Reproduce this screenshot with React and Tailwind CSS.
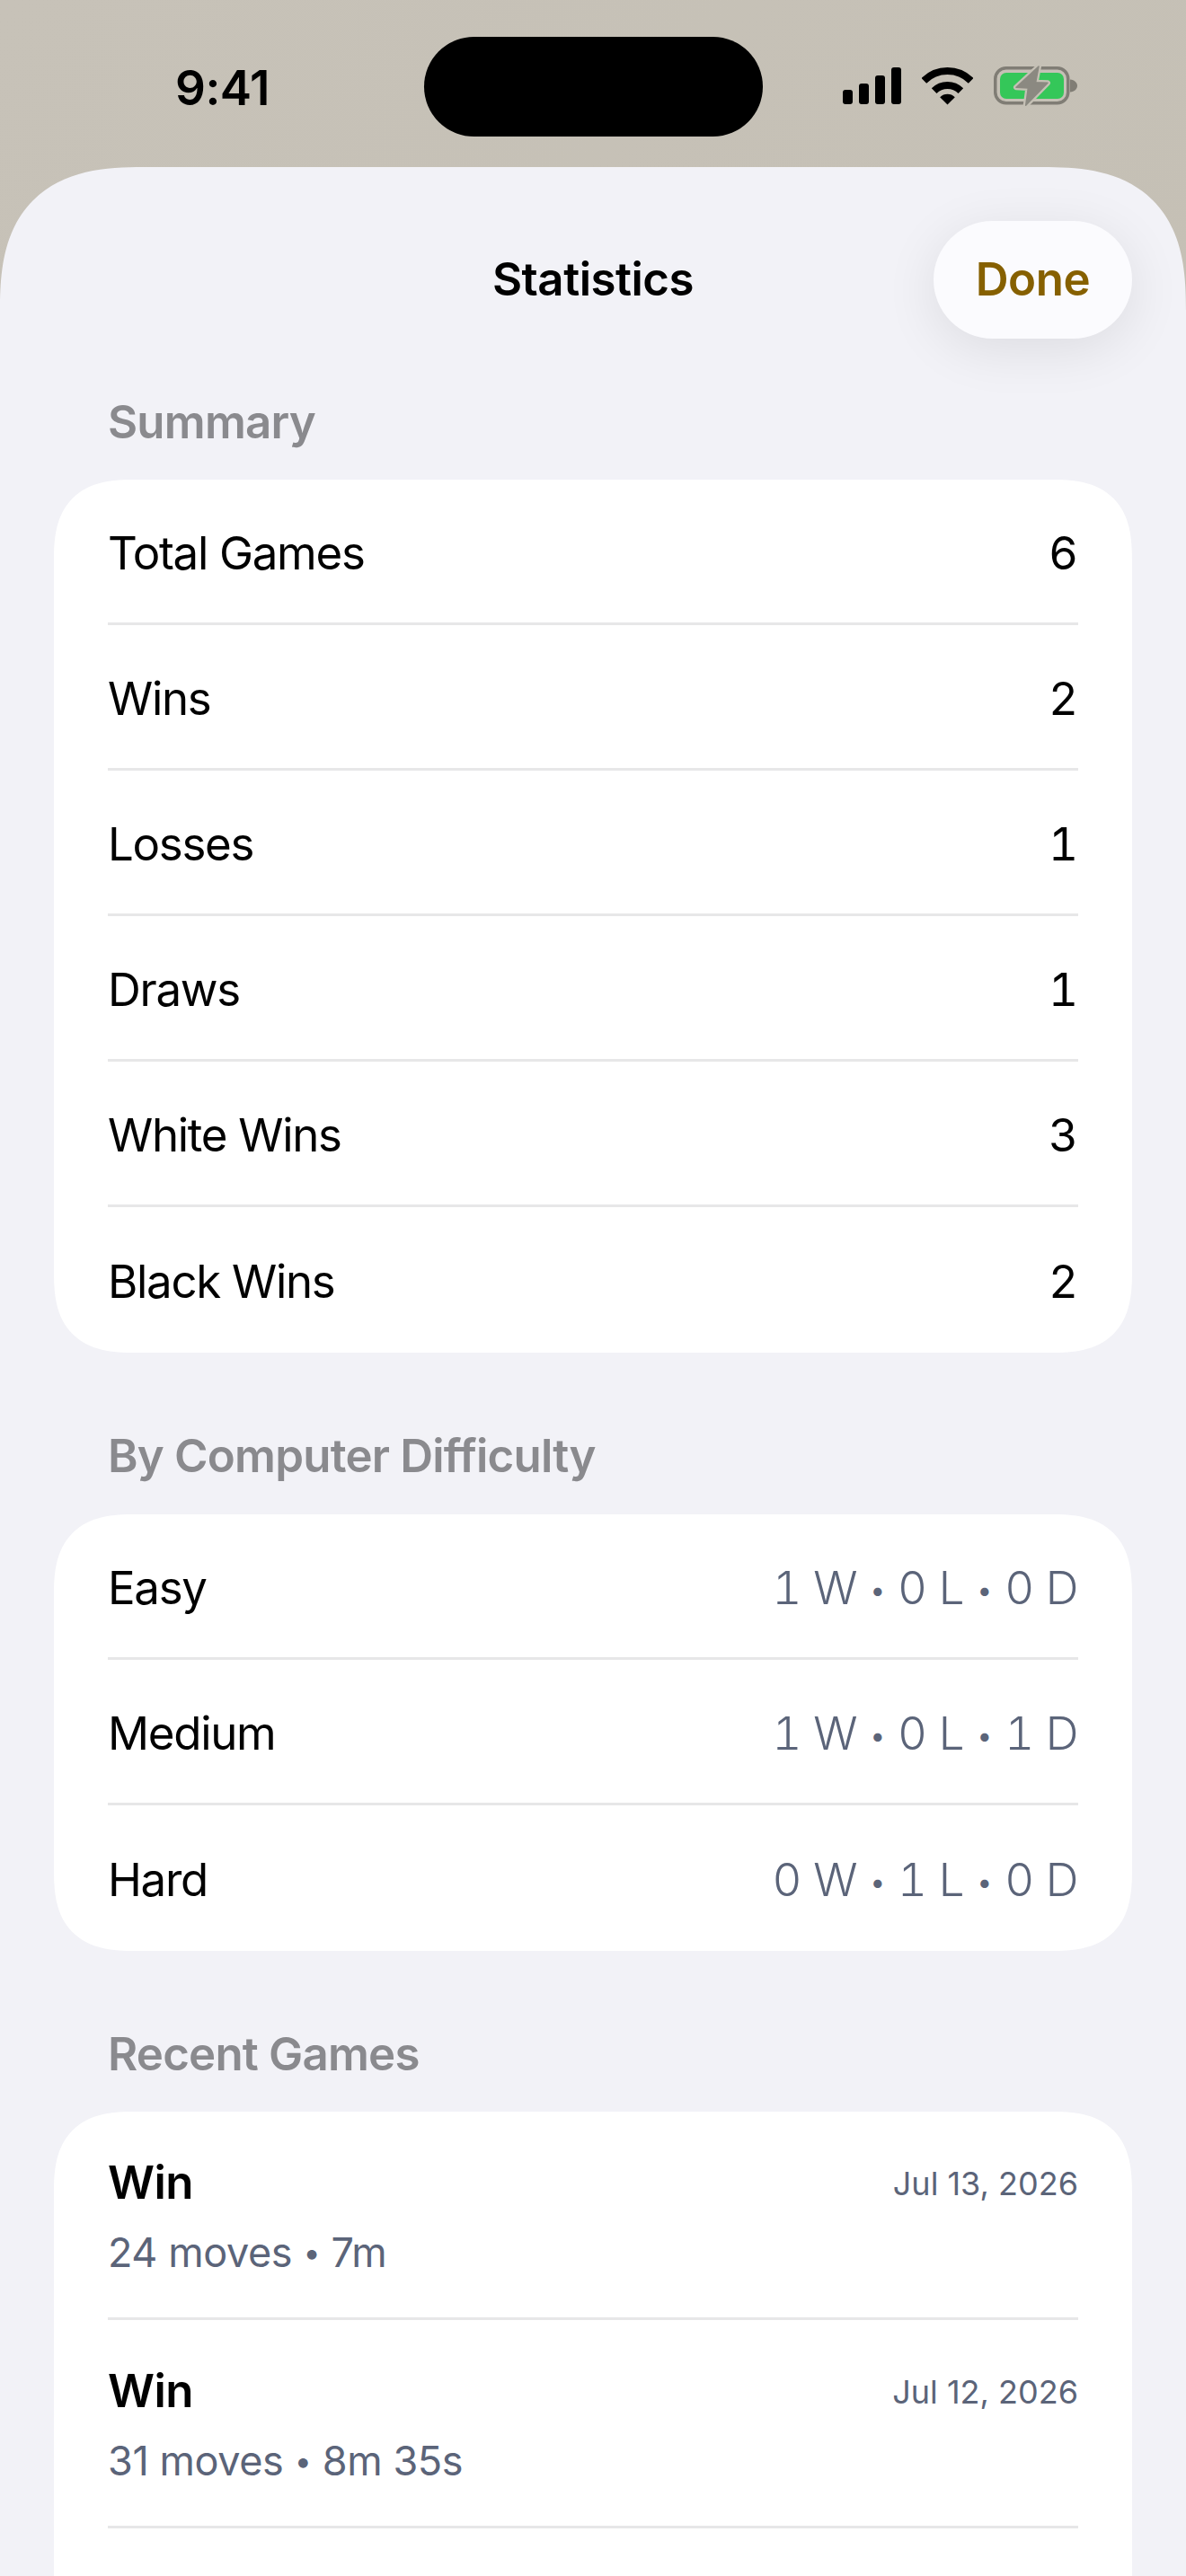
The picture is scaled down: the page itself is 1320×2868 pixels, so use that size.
const Sep = () => <span className="text-[34px] align-[4px]">•</span>;

const Stat = ({ parts }) => (
  <span className="text-[51px] text-[#5b6479] font-light tracking-[-0.5px] tabular-nums">
    {parts[0]} <Sep /> {parts[1]} <Sep /> {parts[2]}
  </span>
);

const Row = ({ label, value, parts, last }) => (
  <>
    <div className={`flex items-center justify-between px-[60px] pt-[5px] ${last ? "h-[162px]" : "h-[159px]"}`}>
      <span className="text-[51px] text-black tracking-[-1.3px]">{label}</span>
      {parts ? <Stat parts={parts} /> : <span className="text-[51px] text-black tabular-nums">{value}</span>}
    </div>
    {!last && <div className="mx-[60px] h-[3px] bg-[#e7e7e8]" />}
  </>
);

const GameRow = ({ date, detail }) => (
  <>
    <div className="flex h-[229px] justify-between px-[60px] pt-[47px]">
      <div className="flex flex-col">
        <span className="text-[51px] leading-[64px] font-semibold text-black tracking-[-0.6px]">Win</span>
        <span className="mt-[19px] text-[45px] leading-[54px] text-[#5b6479] tracking-[-0.4px]">
          {detail[0]} <Sep /> {detail[1]}
        </span>
      </div>
      <span className="mt-[6px] text-[36px] leading-[54px] text-[#5b6479]">{date}</span>
    </div>
    <div className="mx-[60px] h-[3px] bg-[#e7e7e8]" />
  </>
);

const Label = ({ children, className }) => (
  <h2 className={`px-[120px] text-[51px] leading-[62px] font-semibold text-[#8a8a8e] tracking-[-0.8px] ${className}`}>{children}</h2>
);

const Signal = () => (
  <svg width="65" height="41" viewBox="0 0 65 41" fill="#000">
    <rect x="0" y="25" width="11" height="16" rx="3" />
    <rect x="18" y="18" width="11" height="23" rx="3" />
    <rect x="36" y="9" width="11" height="32" rx="3" />
    <rect x="54" y="0" width="11" height="41" rx="3" />
  </svg>
);

const Wifi = () => (
  <svg width="57" height="42" viewBox="0 0 57 42">
    <path d="M2.34 14.84A37 37 0 0 1 54.66 14.84" fill="none" stroke="#000" strokeWidth="8" />
    <path d="M13.65 26.15A21 21 0 0 1 43.35 26.15" fill="none" stroke="#000" strokeWidth="8" />
    <path d="M28.5 41.5L20.2 33.2A11.7 11.7 0 0 1 36.8 33.2Z" fill="#000" />
  </svg>
);

const Battery = () => (
  <svg width="93" height="46" viewBox="0 0 93 46">
    <rect x="1.75" y="2.75" width="81" height="39" rx="12" fill="none" stroke="#807d75" strokeWidth="3.5" />
    <rect x="7" y="8" width="71" height="29" rx="7" fill="#34c759" />
    <path d="M85 15.5C90 16 93 19 93 22.5C93 26 90 29 85 29.5Z" fill="#807d75" />
    <path d="M50 1L25 24.3L38.3 25L35.7 44.3L60 19.3L46.7 18.7Z" fill="#c5c0b5" stroke="#c5c0b5" strokeWidth="6" strokeLinejoin="round" />
    <path d="M50 1L25 24.3L38.3 25L35.7 44.3L60 19.3L46.7 18.7Z" fill="#8b8981" stroke="#8b8981" strokeWidth="1.5" strokeLinejoin="round" />
  </svg>
);

export default function App() {
  return (
    <div className="flex h-[2868px] w-[1320px] flex-col overflow-hidden bg-[linear-gradient(135deg,#c7c2b8,#c2bdb1)] font-['Inter','Noto_Sans',sans-serif] antialiased">
      <div className="grid h-[186px] shrink-0 grid-cols-[1fr_auto_1fr] items-start">
        <span className="mt-[66px] pl-[195px] text-[53px] leading-[64px] font-semibold text-black tracking-[-0.5px]">9:41</span>
        <div className="mt-[41px] h-[111px] w-[377px] rounded-full bg-black" />
        <div className="mt-[75px] flex items-start pl-[89px]">
          <Signal />
          <div className="ml-[23px]"><Wifi /></div>
          <div className="ml-[23px] -mt-[2px]"><Battery /></div>
        </div>
      </div>

      <div className="flex flex-1 flex-col rounded-t-[160px] bg-[#f2f2f7] [corner-shape:superellipse(1.4)]">
        <div className="grid grid-cols-[1fr_auto_1fr] items-center px-[60px] pt-[60px]">
          <div />
          <h1 className="text-[51px] font-semibold text-black tracking-[-0.5px]">Statistics</h1>
          <button className="h-[131px] w-[221px] justify-self-end rounded-full bg-[#fbfbfe] text-[51px] font-semibold text-[#866000] tracking-[-0.4px] shadow-[0_12px_60px_rgba(0,0,0,0.09)]">Done</button>
        </div>

        <Label className="mt-[62px]">Summary</Label>
        <div className="mx-[60px] mt-[33px] rounded-[90px] bg-white [corner-shape:superellipse(1.4)]">
          <Row label="Total Games" value="6" />
          <Row label="Wins" value="2" />
          <Row label="Losses" value="1" />
          <Row label="Draws" value="1" />
          <Row label="White Wins" value="3" />
          <Row label="Black Wins" value="2" last />
        </div>

        <Label className="mt-[84px]">By Computer Difficulty</Label>
        <div className="mx-[60px] mt-[34px] rounded-[90px] bg-white [corner-shape:superellipse(1.4)]">
          <Row label="Easy" parts={["1 W", "0 L", "0 D"]} />
          <Row label="Medium" parts={["1 W", "0 L", "1 D"]} />
          <Row label="Hard" parts={["0 W", "1 L", "0 D"]} last />
        </div>

        <Label className="mt-[84px]">Recent Games</Label>
        <div className="mx-[60px] mt-[33px] flex-1 rounded-t-[90px] bg-white [corner-shape:superellipse(1.4)]">
          <GameRow date="Jul 13, 2026" detail={["24 moves", "7m"]} />
          <GameRow date="Jul 12, 2026" detail={["31 moves", "8m 35s"]} />
        </div>
      </div>
    </div>
  );
}
